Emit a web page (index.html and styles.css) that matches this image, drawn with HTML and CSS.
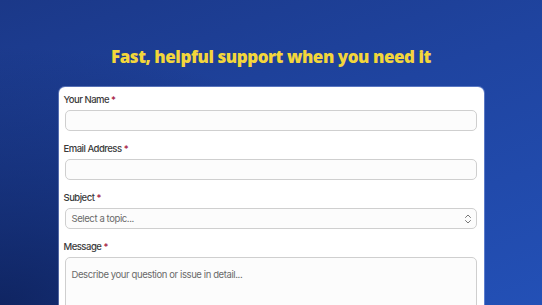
FILE: index.html
```html
<!DOCTYPE html>
<html>
<head>
<meta charset="utf-8">
<link rel="stylesheet" href="styles.css">
</head>
<body>
<div class="page">
  <h1 class="title">Fast, helpful support when you need it</h1>
  <form class="card">
    <div class="field">
      <label class="label">Your Name <span class="req">*</span></label>
      <input class="input" type="text">
    </div>
    <div class="field">
      <label class="label">Email Address <span class="req">*</span></label>
      <input class="input" type="email">
    </div>
    <div class="field">
      <label class="label">Subject <span class="req">*</span></label>
      <div class="select">
        <span class="placeholder">Select a topic...</span>
        <svg class="chev" width="8" height="12" viewBox="0 0 8 12"><path d="M1.5 4.5 L4 2 L6.5 4.5 M1.5 7.5 L4 10 L6.5 7.5" fill="none" stroke="#777" stroke-width="1" stroke-linecap="round" stroke-linejoin="round"/></svg>
      </div>
    </div>
    <div class="field">
      <label class="label">Message <span class="req">*</span></label>
      <div class="textarea"><span class="placeholder">Describe your question or issue in detail...</span></div>
    </div>
  </form>
</div>
</body>
</html>
```
FILE: styles.css
```css
html, body {
  margin: 0;
  padding: 0;
  height: 100%;
  overflow: hidden;
}
body {
  background: linear-gradient(160deg, #1b3888 0%, #1f44a0 45%, #2350b6 100%);
  font-family: Inter, "Liberation Sans", sans-serif;
}
.page {
  height: 305px;
  overflow: hidden;
  background: radial-gradient(ellipse at 0% 100%, rgba(10, 25, 75, 0.75) 0%, rgba(10, 25, 75, 0) 60%);
  display: flex;
  flex-direction: column;
  align-items: center;
}
.title {
  flex-shrink: 0;
  margin: 44px 0 17px 0;
  font-family: "Open Sans", sans-serif;
  font-weight: 800;
  font-size: 17px;
  line-height: 26px;
  color: #f3d63b;
  letter-spacing: -0.45px;
}
.card {
  flex-shrink: 0;
  width: 425px;
  height: 260px;
  box-sizing: border-box;
  background: #fff;
  border-radius: 6px;
  box-shadow: 0 0 0 1px rgba(200, 215, 255, 0.35);
  padding: 6px 7px 0 7px;
  display: flex;
  flex-direction: column;
  gap: 11px;
}
.field {
  display: flex;
  flex-direction: column;
  gap: 3px;
}
.label {
  font-size: 9.5px;
  font-weight: 500;
  letter-spacing: -0.5px;
  line-height: 14px;
  color: #3a3a3a;
  margin-left: -2px;
}
.req {
  color: #a3123a;
}
.input, .select, .textarea {
  box-sizing: border-box;
  height: 21px;
  border: 1px solid #cfcfcf;
  border-radius: 5px;
  background: #fcfcfc;
  margin: 0 0 0 -1px;
  padding: 0 6px;
  font: inherit;
}
.select {
  display: flex;
  align-items: center;
  justify-content: space-between;
}
.textarea {
  height: 60px;
  padding-top: 4px;
}
.placeholder {
  font-size: 9.5px;
  letter-spacing: -0.4px;
  color: #6a6a6a;
  line-height: 14px;
}
.chev {
  margin-right: -2px;
}
```
